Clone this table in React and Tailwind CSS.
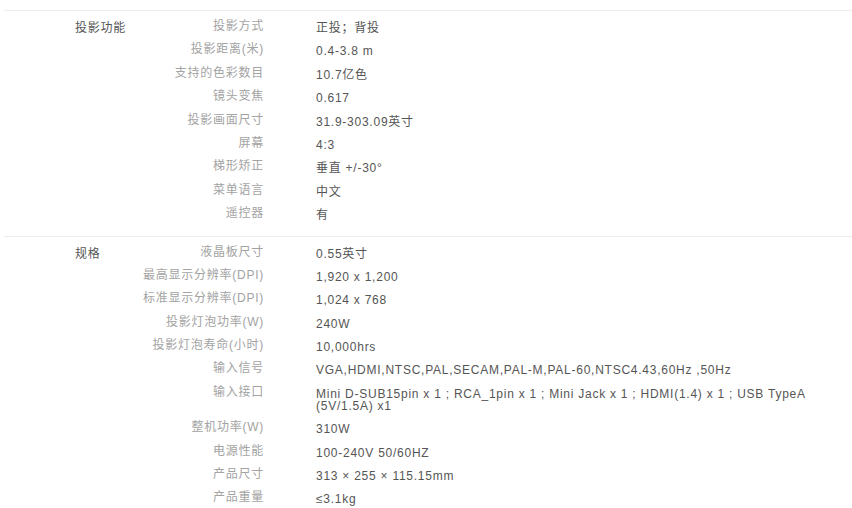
const sections = [
  {
    title: "投影功能",
    rows: [
      ["投影方式", "正投；背投"],
      ["投影距离(米)", "0.4-3.8 m"],
      ["支持的色彩数目", "10.7亿色"],
      ["镜头变焦", "0.617"],
      ["投影画面尺寸", "31.9-303.09英寸"],
      ["屏幕", "4:3"],
      ["梯形矫正", "垂直 +/-30°"],
      ["菜单语言", "中文"],
      ["遥控器", "有"],
    ],
  },
  {
    title: "规格",
    rows: [
      ["液晶板尺寸", "0.55英寸"],
      ["最高显示分辨率(DPI)", "1,920 x 1,200"],
      ["标准显示分辨率(DPI)", "1,024 x 768"],
      ["投影灯泡功率(W)", "240W"],
      ["投影灯泡寿命(小时)", "10,000hrs"],
      ["输入信号", "VGA,HDMI,NTSC,PAL,SECAM,PAL-M,PAL-60,NTSC4.43,60Hz ,50Hz"],
      [
        "输入接口",
        "Mini D-SUB15pin x 1 ; RCA_1pin x 1 ; Mini Jack x 1 ; HDMI(1.4) x 1 ; USB TypeA (5V/1.5A) x1",
      ],
      ["整机功率(W)", "310W"],
      ["电源性能", "100-240V 50/60HZ"],
      ["产品尺寸", "313 × 255 × 115.15mm"],
      ["产品重量", "≤3.1kg"],
    ],
  },
];

function App() {
  return (
    <div
      className="w-[852px] h-[508px] bg-white pt-[10px] pl-[4px] text-[12px] tracking-[0.75px] overflow-hidden"
      style={{ fontFamily: '"Liberation Sans", Arial, "Noto Sans CJK SC", sans-serif' }}
    >
      {sections.map((section) => (
        <div
          key={section.title}
          className="flex border-t border-[#ededed] pt-[4px] pb-[10px] pl-[71px]"
        >
          <div className="w-[65px] shrink-0 pt-[7px] leading-[12px] text-[#555]">
            {section.title}
          </div>
          <div className="flex flex-col">
            {section.rows.map(([label, value]) => (
              <div key={label} className="flex items-start pt-[5px] pb-[4.4px]">
                <div className="w-[124px] shrink-0 text-right whitespace-nowrap leading-[12px] text-[#a3a3a3]">
                  {label}
                </div>
                <div className="ml-[52px] w-[500px] pt-[2px] leading-[12px] text-[#555]">
                  {value}
                </div>
              </div>
            ))}
          </div>
        </div>
      ))}
    </div>
  );
}

export default App;
